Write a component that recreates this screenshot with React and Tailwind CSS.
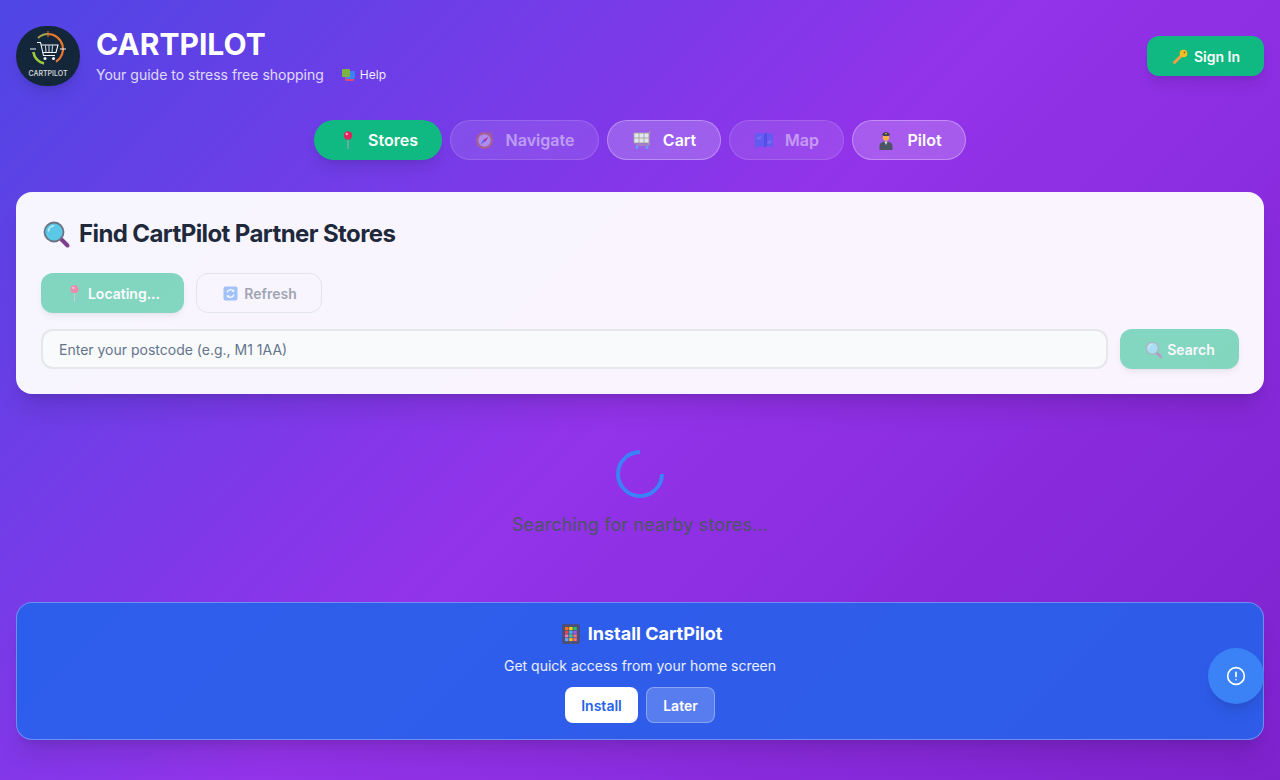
import React from 'react';

// emoji drawn by hand so they keep the look of the screenshot
function PinIcon({ size = 20 }) {
  return (
    <svg width={size} height={size} viewBox="0 0 20 20">
      <path d="M10 8v11" stroke="#9ca3af" strokeWidth="1.2" />
      <circle cx="10" cy="5.5" r="4.2" fill="#e0245e" />
      <circle cx="8.8" cy="4" r="1.2" fill="#f9a8c0" />
    </svg>
  );
}

function CompassIcon() {
  return (
    <svg width="20" height="20" viewBox="0 0 20 20">
      <circle cx="15.5" cy="3.8" r="1.8" fill="none" stroke="#d9823f" strokeWidth="1" />
      <circle cx="9.5" cy="10.5" r="8.5" fill="#d9823f" />
      <circle cx="9.5" cy="10.5" r="6.2" fill="#e4dcf5" />
      <path d="M13.5 6.5l-3 5-2-1.800z" fill="#e0245e" />
      <path d="M5.500 14.500l3-5 2 1.800z" fill="#3b82f6" />
    </svg>
  );
}

function CartIcon() {
  return (
    <svg width="20" height="20" viewBox="0 0 20 20" fill="none">
      <rect x="2" y="3" width="15" height="10" fill="#e2e8f0" />
      <path d="M2 3h15v10H2zM7 3v10M12 3v10M2 8h15" stroke="#a8a29e" strokeWidth="0.9" />
      <path d="M17 3l1.500-1.500M17 13v2H4" stroke="#a8a29e" strokeWidth="1.200" />
      <circle cx="5" cy="17.500" r="1.400" fill="#60a5fa" />
      <circle cx="15" cy="17.500" r="1.400" fill="#60a5fa" />
    </svg>
  );
}

function MapIcon() {
  return (
    <svg width="20" height="20" viewBox="0 0 20 20">
      <path d="M1 4l6-1.500 3 1.500 3-1.500 6 1.500v13.500l-6-1.500-3 1.500-3-1.500-6 1.500z" fill="#3b82f6" />
      <path d="M10 4v13.500l3-1.500V2.500z" fill="#2563eb" />
      <path d="M3 7l4-1v3l-4 1zM13.500 11l4-1v3l-4 1z" fill="#60a5fa" />
    </svg>
  );
}

function PilotIcon() {
  return (
    <svg width="20" height="20" viewBox="0 0 20 20">
      <path d="M3.500 20v-4c0-3 2.500-4.500 6.500-4.500s6.500 1.500 6.500 4.500v4z" fill="#4b5563" />
      <path d="M8.500 11.500h3L10 15z" fill="#e5e7eb" />
      <circle cx="10" cy="7.500" r="3.200" fill="#f5b342" />
      <path d="M6 4.500c2-3.500 6-3.500 8 0l-1.500 1.500h-5z" fill="#374151" />
      <rect x="9.300" y="3" width="1.400" height="1.400" fill="#fbbf24" />
    </svg>
  );
}

function SearchIcon({ size = 20 }) {
  return (
    <svg width={size} height={size} viewBox="0 0 30 30">
      <path d="M19 19l7.500 7.500" stroke="#7e3f8f" strokeWidth="4" strokeLinecap="round" />
      <circle cx="13" cy="13" r="9.500" fill="#5cc8e8" stroke="#6b7280" strokeWidth="1.800" />
      <path d="M7.500 12c.5-3 2.500-5 5-5.200" stroke="#b7ecf7" strokeWidth="1.500" fill="none" strokeLinecap="round" />
    </svg>
  );
}

function RefreshIcon() {
  return (
    <svg width="19" height="19" viewBox="0 0 19 19" fill="none">
      <rect x="2.500" y="2.500" width="14" height="14" rx="2" fill="#4f93f5" />
      <path d="M6 8.500a3.800 3.800 0 0 1 6.500-1.500M13 10.500a3.800 3.800 0 0 1-6.500 1.500" stroke="#fff" strokeWidth="1.300" />
      <path d="M13.200 5.200v2.600h-2.600zM5.800 13.800v-2.600h2.600z" fill="#fff" />
    </svg>
  );
}

function KeyIcon() {
  return (
    <svg width="19" height="19" viewBox="0 0 19 19" fill="none">
      <path d="M3.500 15.500l7-7" stroke="#f59e42" strokeWidth="3" strokeLinecap="round" />
      <circle cx="12.500" cy="6.500" r="3.800" fill="#fbbf24" />
      <circle cx="13.500" cy="5.500" r="0.900" fill="#b45309" />
    </svg>
  );
}

function BooksIcon() {
  return (
    <svg width="16" height="16" viewBox="0 0 16 16">
      <rect x="5" y="6" width="9" height="8" rx="1" fill="#dc4a6e" />
      <rect x="6" y="4" width="9" height="8" rx="1" fill="#3b82f6" />
      <rect x="2" y="2" width="8" height="8" rx="1" fill="#7cb342" />
    </svg>
  );
}

function PhoneIcon() {
  const cells = ['#f97316', '#facc15', '#22c55e', '#ef4444', '#38bdf8', '#a855f7', '#f472b6', '#34d399', '#fb7185', '#60a5fa', '#fbbf24', '#f87171'];
  return (
    <svg width="26" height="26" viewBox="0 0 26 26">
      <rect x="4" y="3" width="18" height="20" rx="2" fill="#4c4f7a" />
      {cells.map((c, i) => (
        <rect key={i} x={7 + (i % 3) * 4.200} y={6 + Math.floor(i / 3) * 3.700} width="3.400" height="3" fill={c} />
      ))}
    </svg>
  );
}

function CartLogo() {
  return (
    <div className="w-16 h-[60px] rounded-[30px] bg-[#14263a] flex flex-col items-center overflow-hidden shadow-lg shrink-0">
      <svg width="36" height="36" viewBox="0 0 36 36" className="mt-[5px]" fill="none">
        <path d="M18 3a15 15 0 0 1 8 27.700" stroke="#e8772e" strokeWidth="2.200" />
        <path d="M18 3A15 15 0 0 0 8 7" stroke="#a3a34a" strokeWidth="2.200" />
        <path d="M3.300 21a15 15 0 0 0 10.700 11.500" stroke="#9ccc3c" strokeWidth="2.600" />
        <path d="M18 0v6" stroke="#e8772e" strokeWidth="1" />
        <path d="M0 18h6M30 18h6" stroke="#f1f5f9" strokeWidth="1" />
        <path d="M7 11.500h3.500l3 13h11.500" stroke="#f1f5f9" strokeWidth="1.100" />
        <path d="M11 14h17l-2 7.500H13" stroke="#f1f5f9" strokeWidth="1.100" />
        <path d="M15.500 14.500l.5 6.500M19 14.500v6.500M22.500 14.500l-.5 6.500" stroke="#f1f5f9" strokeWidth="0.900" />
        <circle cx="15" cy="27.500" r="1.500" fill="#f1f5f9" />
        <circle cx="23.500" cy="27.500" r="1.500" fill="#f1f5f9" />
      </svg>
      <span className="text-[7px] leading-none font-medium text-white/85 mt-[3px] whitespace-nowrap">CARTPILOT</span>
    </div>
  );
}

function NavButton({ icon, label, active, disabled, width }) {
  const tone = active
    ? 'bg-[#10b981] shadow-lg gap-[10px]'
    : 'bg-white/20 border border-white/30 gap-[11px]';
  return (
    <button className={`h-10 rounded-full flex items-center justify-center text-base font-semibold text-white ${width} ${tone} ${disabled ? 'opacity-50' : ''}`}>
      {icon}
      {label}
    </button>
  );
}

function ActionButton({ icon, label, className }) {
  return (
    <button className={`h-10 rounded-xl flex items-center justify-center gap-1 text-sm font-semibold ${className}`}>
      {icon}
      <span className="pt-[2px]">{label}</span>
    </button>
  );
}

export default function App() {
  return (
    <div
      style={{ fontFamily: 'Inter, sans-serif' }}
      className="min-h-[780px] px-4 pt-[26px] bg-[linear-gradient(135deg,#4f46e5_0%,#9333ea_50%,#7e22ce_100%)] relative overflow-hidden"
    >
      <header className="flex items-start justify-between">
        <div className="flex gap-4">
          <CartLogo />
          <div>
            <h1 className="text-3xl leading-9 font-bold text-white">CARTPILOT</h1>
            <div className="flex items-center mt-[3px]">
              <p className="text-sm leading-5 text-white/80">Your guide to stress free shopping</p>
              <span className="ml-4 flex items-center gap-1 text-xs text-white/90">
                <BooksIcon />
                Help
              </span>
            </div>
          </div>
        </div>
        <ActionButton
          icon={<KeyIcon />}
          label="Sign In"
          className="mt-[10px] w-[117px] bg-[#10b981] text-white shadow-lg"
        />
      </header>

      <nav className="flex justify-center gap-2 mt-[34px]">
        <NavButton icon={<PinIcon />} label="Stores" active width="w-[128px]" />
        <NavButton icon={<CompassIcon />} label="Navigate" disabled width="w-[149px]" />
        <NavButton icon={<CartIcon />} label="Cart" width="w-[114px]" />
        <NavButton icon={<MapIcon />} label="Map" disabled width="w-[115px]" />
        <NavButton icon={<PilotIcon />} label="Pilot" width="w-[114px]" />
      </nav>

      <section className="mt-8 bg-white/95 rounded-2xl px-[25px] pt-6 pb-[25px] shadow-xl">
        <h2 className="flex items-center gap-2 text-2xl leading-9 font-bold text-[#1e293b] tracking-[-0.6px]">
          <SearchIcon size={30} />
          Find CartPilot Partner Stores
        </h2>
        <div className="flex gap-3 mt-[21px]">
          <ActionButton
            icon={<PinIcon size={19} />}
            label="Locating..."
            className="w-[143px] bg-[#10b981] text-white shadow-md opacity-50"
          />
          <ActionButton
            icon={<RefreshIcon />}
            label="Refresh"
            className="w-[126px] border border-[#cbd5e1] text-[#475569] opacity-50"
          />
        </div>
        <div className="flex gap-3 mt-4">
          <input
            readOnly
            placeholder="Enter your postcode (e.g., M1 1AA)"
            className="flex-1 h-10 rounded-xl border-2 border-[#e5e7eb] bg-[#f8fafc] px-4 text-sm placeholder:text-[#64748b] outline-none"
          />
          <ActionButton
            icon={<SearchIcon size={19} />}
            label="Search"
            className="w-[119px] bg-[#10b981] text-white shadow-md opacity-50"
          />
        </div>
      </section>

      <div className="flex flex-col items-center mt-14">
        <div className="w-12 h-12 rounded-full border-4 border-[#3b82f6] border-t-transparent rotate-45" />
        <p className="mt-[13px] text-lg leading-7 tracking-[0.14px] text-[#4b5563]">Searching for nearby stores...</p>
      </div>

      <section className="mt-[63px] h-[138px] rounded-2xl border border-white/30 bg-[#2563eb]/90 flex flex-col items-center pt-[17px] text-white shadow-xl">
        <h3 className="flex items-center gap-1 text-lg leading-7 font-bold">
          <PhoneIcon />
          Install CartPilot
        </h3>
        <p className="mt-2 text-sm leading-5 text-white/90">Get quick access from your home screen</p>
        <div className="flex gap-2 mt-[11px]">
          <button className="h-9 w-[73px] pt-[2px] rounded-lg bg-white text-[#2563eb] text-sm font-semibold">Install</button>
          <button className="h-9 w-[69px] pt-[2px] rounded-lg bg-white/20 border border-white/30 text-white text-sm font-semibold">Later</button>
        </div>
      </section>

      <button className="absolute right-4 top-[648px] w-14 h-14 rounded-full bg-[#3b82f6] text-white flex items-center justify-center shadow-lg">
        <svg width="20" height="20" viewBox="0 0 24 24" fill="none" stroke="currentColor" strokeWidth="2" strokeLinecap="round">
          <circle cx="12" cy="12" r="10" />
          <path d="M12 7.500v5M12 16.500v.01" />
        </svg>
      </button>
    </div>
  );
}
